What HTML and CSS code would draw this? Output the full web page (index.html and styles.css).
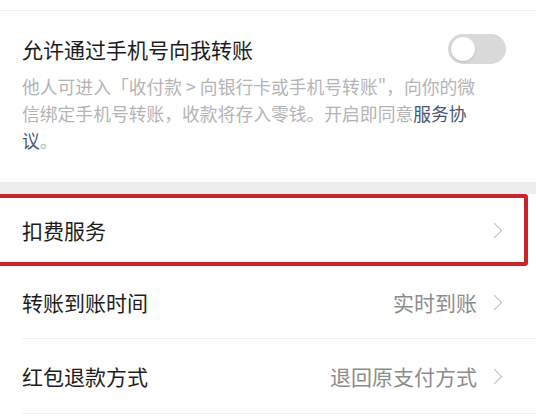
FILE: index.html
```html
<!DOCTYPE html>
<html lang="zh-CN">

<head>
    <meta charset="UTF-8">
    <meta name="viewport" content="width=device-width, initial-scale=1.0">
    <title>转账设置</title>
    <link rel="stylesheet" href="styles.css">
</head>

<body>
    <div class="page">
        <!-- 手机号转账开关 -->
        <div class="group group-top">
            <div class="switch-row">
                <span class="row-title">允许通过手机号向我转账</span>
                <span class="switch"><span class="knob"></span></span>
            </div>
            <p class="desc">他人可进入「收付款 &gt; 向银行卡或手机号转账"，向你的微信绑定手机号转账，收款将存入零钱。开启即同意<a class="link">服务协</a><br><a class="link">议</a>。</p>
        </div>

        <div class="gap"></div>

        <div class="group">
            <div class="cell cell-marked">
                <span class="row-title">扣费服务</span>
                <span class="cell-right"><span class="arrow"></span></span>
            </div>
            <div class="cell">
                <span class="row-title">转账到账时间</span>
                <span class="cell-right"><span class="value">实时到账</span><span class="arrow"></span></span>
            </div>
            <div class="cell">
                <span class="row-title">红包退款方式</span>
                <span class="cell-right"><span class="value">退回原支付方式</span><span class="arrow"></span></span>
            </div>
        </div>
    </div>
</body>

</html>
```

FILE: styles.css
```css
body {
    margin: 0;
    background-color: #ffffff;
    font-family: "Noto Sans CJK SC", "Noto Sans", sans-serif;
    color: #1c1c1c;
}

.page {
    width: 536px;
    height: 418px;
    overflow: hidden;
}

.group {
    background-color: #ffffff;
}

.group-top {
    margin-top: 10px;
    border-top: 1px solid #efefef;
    padding: 18px 0 0 22px;
    height: 153px;
}

.switch-row {
    display: flex;
    align-items: center;
    justify-content: space-between;
    height: 40px;
    padding-right: 30px;
}

.row-title {
    font-size: 21px;
    line-height: 30px;
}

.switch {
    width: 58px;
    height: 30px;
    border-radius: 15px;
    background-color: #d9d9d9;
    display: flex;
    align-items: center;
    padding-left: 3px;
    box-sizing: border-box;
}

.knob {
    width: 24px;
    height: 24px;
    border-radius: 50%;
    background-color: #ffffff;
    box-shadow: 0 1px 2px rgba(0, 0, 0, 0.15);
}

.desc {
    margin: 4px 0 0 0;
    width: 462px;
    font-size: 17.8px;
    line-height: 27px;
    color: #b4b4b4;
}

.link {
    color: #4a5670;
}

.gap {
    height: 12px;
    background-color: #ededed;
}

.cell {
    display: flex;
    align-items: center;
    justify-content: space-between;
    height: 73px;
    margin-left: 22px;
    padding-right: 36px;
    border-bottom: 1px solid #f0f0f0;
    box-sizing: border-box;
}

.cell:last-child {
    height: 75px;
}

.cell-marked {
    margin-left: -4px;
    padding-left: 22px;
    margin-right: 8px;
    padding-right: 24px;
    border: 4px solid #c9232b;
    border-radius: 3px;
    height: 72px;
}

.cell-right {
    display: flex;
    align-items: center;
}

.value {
    font-size: 21px;
    color: #8c8c8c;
    margin-right: 12px;
}

.arrow {
    width: 10px;
    height: 10px;
    border-top: 1.6px solid #bcbcbc;
    border-right: 1.6px solid #bcbcbc;
    transform: rotate(45deg);
}
```
